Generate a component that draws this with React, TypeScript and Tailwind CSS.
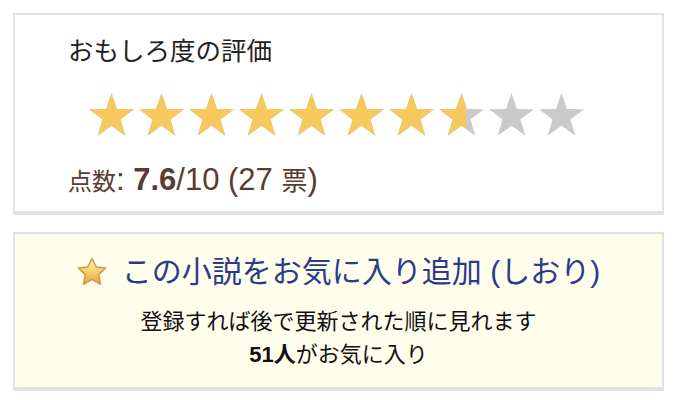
import * as React from 'react';

const FONT = { fontFamily: '"Liberation Sans", "Noto Sans CJK JP", sans-serif' };

const STAR_PATH =
  'M24 1 L29.6 17.3 L47 17.6 L33.1 28.1 L38.2 44.6 L24 34.6 L9.8 44.6 L14.9 28.1 L1 17.6 L18.4 17.3 Z';

function StarRow({ color }: { color: string }) {
  return (
    <div className="flex gap-[3px]">
      {Array.from({ length: 10 }).map((_, i) => (
        <svg key={i} width="47" height="45" viewBox="0 0 48 46" className="shrink-0">
          <path d={STAR_PATH} fill={color} />
        </svg>
      ))}
    </div>
  );
}

// 10点満点の星表示。色付きの列をスコア分だけ切り出して重ねる
function Rating({ score }: { score: number }) {
  const pct = (score / 10) * 100;
  return (
    <div className="relative w-[497px]">
      <StarRow color="#cacaca" />
      <div className="absolute top-0 left-0 overflow-hidden" style={{ width: `${pct}%` }}>
        <StarRow color="#f6c95f" />
      </div>
    </div>
  );
}

function FavStar() {
  return (
    <svg width="30" height="30" viewBox="0 0 30 30" className="shrink-0">
      <defs>
        <linearGradient id="fav" x1="0" y1="0" x2="0" y2="1">
          <stop offset="0" stopColor="#fff3b8" />
          <stop offset="0.55" stopColor="#f3cf6a" />
          <stop offset="1" stopColor="#d9a24a" />
        </linearGradient>
      </defs>
      <path
        d="M15 1.5 L19.2 10 L28.5 11.1 L21.6 17.6 L23.5 27.2 L15 22.4 L6.5 27.2 L8.4 17.6 L1.5 11.1 L10.8 10 Z"
        fill="url(#fav)"
        stroke="#d39b45"
        strokeWidth="1.6"
        strokeLinejoin="round"
      />
    </svg>
  );
}

export default function App() {
  return (
    <div className="w-[680px] h-[400px] bg-white pt-[13px] pl-[13px]" style={FONT}>
      <div className="w-[651px] h-[202px] border-2 border-b-[4px] border-[#e2e2e2] bg-white pl-[53px] pt-[22px]">
        <div className="text-[25.5px] leading-[28px] text-[#222]">おもしろ度の評価</div>
        <div className="mt-[27px] ml-[20px]">
          <Rating score={7.6} />
        </div>
        <div className="mt-[25px] text-[31px] leading-[36px] text-[#5b3b30]">
          <span className="text-[24px]">点数</span>: <span className="font-bold text-[31px]">7.6</span>/10 (27{' '}
          <span className="text-[26px]">票</span>)
        </div>
      </div>

      <div className="mt-[17px] w-[651px] h-[159px] border-2 border-b-[4px] border-[#e2e2e2] bg-[#fffdeb] flex flex-col items-center pt-[20px]">
        <div className="flex items-center gap-[15px] text-[#2b3b8a] text-[30px] leading-[36px]">
          <FavStar />
          <span>この小説をお気に入り追加 (しおり)</span>
        </div>
        <div className="mt-[17px] text-[22px] leading-[30px] text-[#111]">登録すれば後で更新された順に見れます</div>
        <div className="mt-[3px] text-[22px] leading-[30px] text-[#111]">
          <span className="font-bold">51人</span>がお気に入り
        </div>
      </div>
    </div>
  );
}
